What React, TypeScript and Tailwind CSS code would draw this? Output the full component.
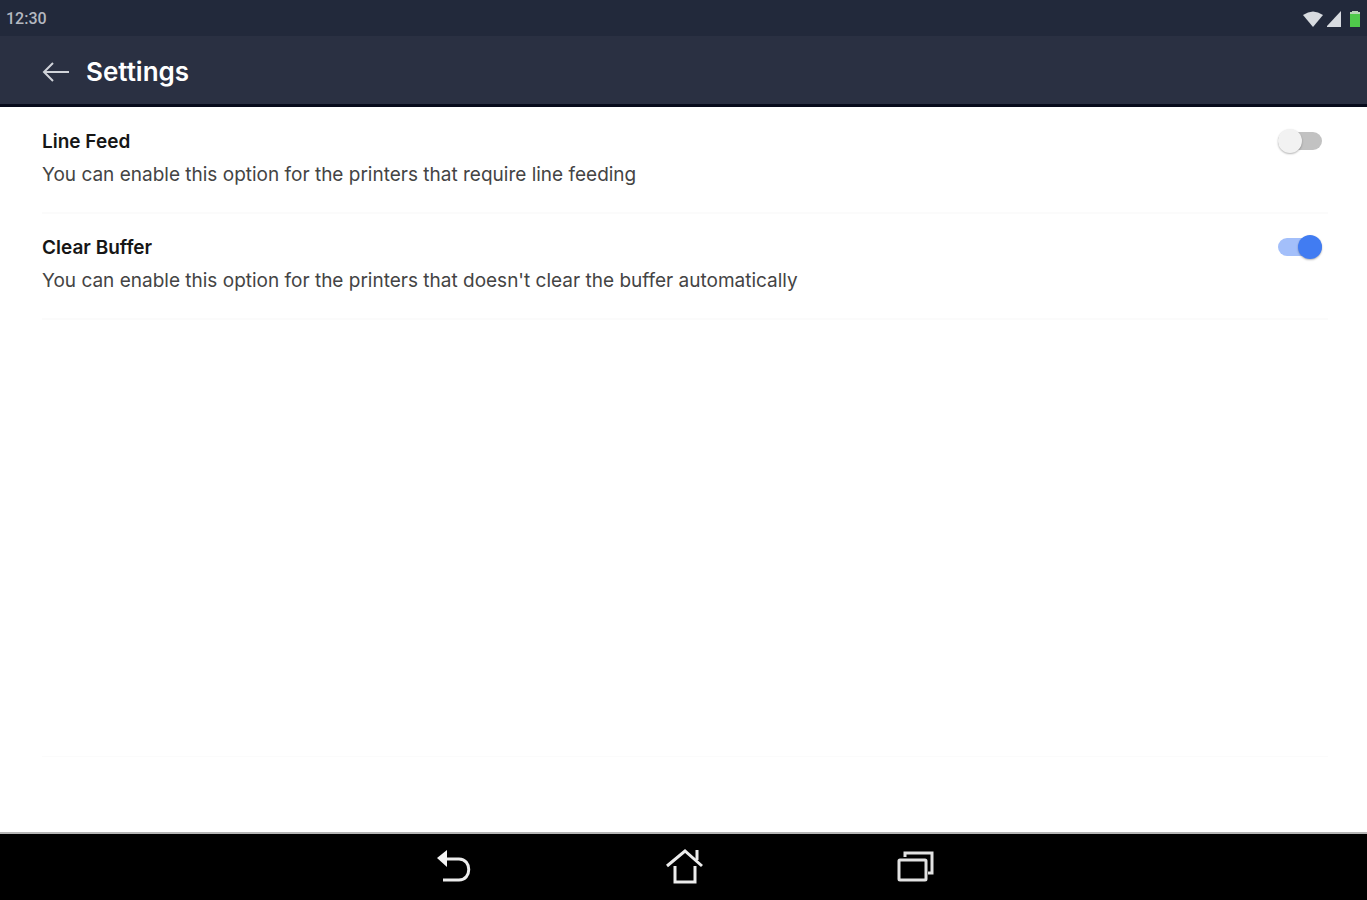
import { useState } from "react";

type Setting = { id: string; title: string; description: string; enabled: boolean };

const settings: Setting[] = [
  {
    id: "line-feed",
    title: "Line Feed",
    description: "You can enable this option for the printers that require line feeding",
    enabled: false,
  },
  {
    id: "clear-buffer",
    title: "Clear Buffer",
    description: "You can enable this option for the printers that doesn't clear the buffer automatically",
    enabled: true,
  },
];

function StatusBar() {
  return (
    <div className="flex h-9 items-center justify-between bg-[#22293b] pt-0.5 pl-1.5 pr-1 font-['Roboto',sans-serif]">
      <span className="text-base font-medium text-[#b4b8c0]">12:30</span>
      <div className="flex items-center gap-1">
        <svg width="20" height="16" viewBox="0 0 20 16" fill="#d8dbe0" aria-hidden="true">
          <path d="M0 4Q10-3 20 4L10 16Z" />
        </svg>
        <svg width="16" height="16" viewBox="0 0 16 16" fill="#d8dbe0" aria-hidden="true">
          <path d="M14 0V16H-1Z" />
        </svg>
        <svg width="16" height="16" viewBox="0 0 16 16" aria-hidden="true">
          <path d="M5 0h6v1h2v15H3V1h2z" fill="#4fc94b" />
          <path d="M5 0h6v1h2v2H3V1h2z" fill="#b9d3b8" />
        </svg>
      </div>
    </div>
  );
}

function Header() {
  return (
    <header className="flex h-[71px] items-center gap-4 border-b-3 border-[#070b1b] bg-[#2a3042] pt-1 pl-[42px]">
      <button type="button" aria-label="Back">
        <svg width="28" height="22" viewBox="0 0 28 22" fill="none" stroke="#d0d3d9" strokeWidth="2" aria-hidden="true">
          <path d="M27 11H2M11 2L2 11L11 20" />
        </svg>
      </button>
      <h1 className="text-[26px] leading-8 font-semibold text-white">Settings</h1>
    </header>
  );
}

function SettingRow({ setting }: { setting: Setting }) {
  const [on, setOn] = useState(setting.enabled);
  return (
    <li className="flex h-[106px] items-start justify-between border-b-2 border-[#fbfbfb] pt-5">
      <div>
        <label htmlFor={setting.id} className="block text-[19px] leading-7 font-semibold text-[#161616]">
          {setting.title}
        </label>
        <p id={`${setting.id}-text`} className="mt-[3px] text-[19px] leading-8 text-[#444444]">
          {setting.description}
        </p>
      </div>
      <input
        id={setting.id}
        type="checkbox"
        role="switch"
        aria-describedby={`${setting.id}-text`}
        checked={on}
        onChange={(event) => setOn(event.target.checked)}
        className="relative mr-1.5 h-7 w-11 shrink-0 cursor-pointer appearance-none before:absolute before:inset-x-0 before:top-1 before:h-[18px] before:rounded-full before:bg-[#c2c2c2] after:absolute after:left-0 after:top-px after:size-6 after:rounded-full after:bg-[#f2f2f2] after:shadow-[0_1px_2px_rgba(0,0,0,0.3)] checked:before:bg-[#a3bffa] checked:after:left-5 checked:after:bg-[#417cf2]"
      />
    </li>
  );
}

function NavigationBar() {
  return (
    <nav className="grid h-[68px] grid-cols-[1fr_230px_1fr] items-center border-t-2 border-[#b5b5b5] bg-black">
      <button type="button" aria-label="Go back" className="mr-24 justify-self-end">
        <svg width="36" height="36" viewBox="0 0 36 36" fill="none" aria-hidden="true">
          <path d="M8 10H22C35 10 35 31 22 31H6" stroke="#ececec" strokeWidth="3" />
          <path d="M0 9L10 1V18Z" fill="#f4f4f4" />
        </svg>
      </button>
      <button type="button" aria-label="Home" className="justify-self-center">
        <svg width="38" height="36" viewBox="0 0 38 36" fill="none" stroke="#ececec" aria-hidden="true">
          <path d="M2 17L20 2L37 17" strokeWidth="3" />
          <path d="M32 1V11" strokeWidth="3" />
          <path d="M10 17V33H30V17" strokeWidth="3" />
        </svg>
      </button>
      <button type="button" aria-label="Recent apps" className="ml-24 justify-self-start">
        <svg width="40" height="36" viewBox="0 0 40 36" fill="none" stroke="#e2e2e2" strokeWidth="3" aria-hidden="true">
          <rect x="4" y="11" width="27" height="20" rx="1" />
          <path d="M10 8V4H37V24H33" />
        </svg>
      </button>
    </nav>
  );
}

export default function App() {
  return (
    <div className="flex min-h-screen flex-col bg-white font-['Inter',sans-serif]">
      <StatusBar />
      <Header />
      <main className="flex flex-1 flex-col justify-between pr-[39px] pl-[42px] pt-px">
        <ul>
          {settings.map((setting) => (
            <SettingRow key={setting.id} setting={setting} />
          ))}
        </ul>
        <hr className="mb-[75px] border-[#fbfbfb]" />
      </main>
      <NavigationBar />
    </div>
  );
}
